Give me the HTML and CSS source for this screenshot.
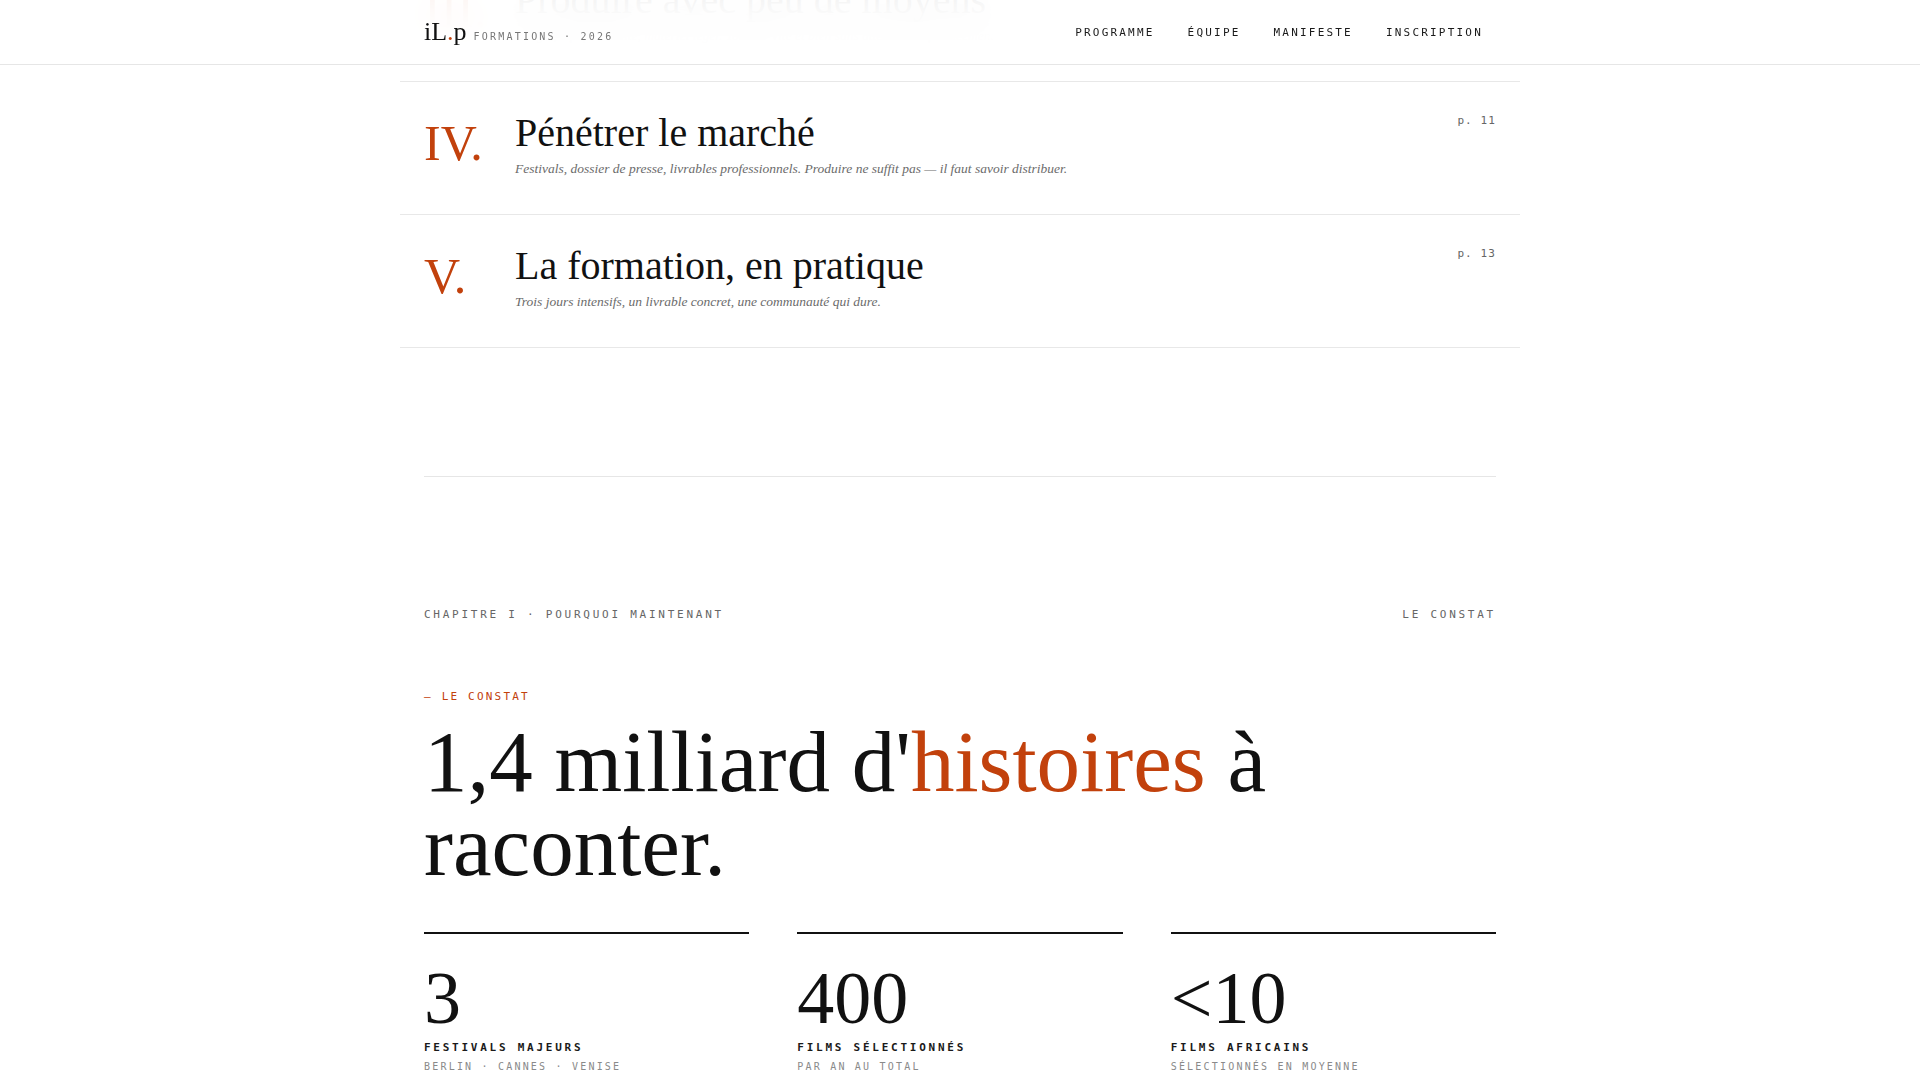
FILE: index.html
```html
<!DOCTYPE html>
<html lang="fr">
<head>
    <meta charset="UTF-8">
    <meta name="viewport" content="width=device-width, initial-scale=1.0">
    <title>iL.p Formations 2026 - Programme</title>
    <link rel="stylesheet" href="styles.css">
</head>
<body>
    <header class="site-header">
        <div class="header-inner">
            <a class="brand" href="#">
                <span class="brand-mark">iL<span class="brand-dot">.</span>p</span>
                <span class="brand-sub">FORMATIONS · 2026</span>
            </a>
            <nav class="main-nav">
                <a href="#programme">PROGRAMME</a>
                <a href="#equipe">ÉQUIPE</a>
                <a href="#manifeste">MANIFESTE</a>
                <a href="#inscription">INSCRIPTION</a>
            </nav>
        </div>
    </header>

    <main>
        <!-- Sommaire -->
        <section class="toc" id="programme">
            <ol class="toc-list">
                <li class="toc-row">
                    <span class="toc-num">III.</span>
                    <div class="toc-body">
                        <h3>Produire avec peu de moyens</h3>
                        <p>Budget, équipe réduite, matériel léger. Tourner vite et bien sans attendre les financements.</p>
                    </div>
                    <span class="toc-page">p. 9</span>
                </li>
                <li class="toc-row">
                    <span class="toc-num">IV.</span>
                    <div class="toc-body">
                        <h3>Pénétrer le marché</h3>
                        <p>Festivals, dossier de presse, livrables professionnels. Produire ne suffit pas — il faut savoir distribuer.</p>
                    </div>
                    <span class="toc-page">p. 11</span>
                </li>
                <li class="toc-row">
                    <span class="toc-num">V.</span>
                    <div class="toc-body">
                        <h3>La formation, en pratique</h3>
                        <p>Trois jours intensifs, un livrable concret, une communauté qui dure.</p>
                    </div>
                    <span class="toc-page">p. 13</span>
                </li>
            </ol>
        </section>

        <div class="wrap">
            <hr class="divider">
        </div>

        <!-- Chapitre I -->
        <section class="chapter wrap" id="manifeste">
            <div class="chapter-head">
                <span>CHAPITRE I · POURQUOI MAINTENANT</span>
                <span>LE CONSTAT</span>
            </div>

            <p class="eyebrow">— LE CONSTAT</p>
            <h2 class="headline">1,4 milliard d'<em>histoires</em> à raconter.</h2>

            <div class="stats">
                <div class="stat">
                    <div class="stat-num">3</div>
                    <div class="stat-label">FESTIVALS MAJEURS</div>
                    <div class="stat-sub">BERLIN · CANNES · VENISE</div>
                </div>
                <div class="stat">
                    <div class="stat-num">400</div>
                    <div class="stat-label">FILMS SÉLECTIONNÉS</div>
                    <div class="stat-sub">PAR AN AU TOTAL</div>
                </div>
                <div class="stat">
                    <div class="stat-num">&lt;10</div>
                    <div class="stat-label">FILMS AFRICAINS</div>
                    <div class="stat-sub">SÉLECTIONNÉS EN MOYENNE</div>
                </div>
            </div>
        </section>
    </main>
</body>
</html>
```

FILE: styles.css
```css
* {
    box-sizing: border-box;
}
body {
    margin: 0;
    background-color: #fff;
    color: #111;
    font-family: "Liberation Serif", "Times New Roman", serif;
}
a {
    color: inherit;
    text-decoration: none;
}

/* Header */
.site-header {
    position: fixed;
    top: 0;
    left: 0;
    right: 0;
    height: 65px;
    background-color: rgba(255, 255, 255, 0.93);
    backdrop-filter: blur(16px);
    border-bottom: 1px solid #e6e6e6;
    z-index: 10;
}
.header-inner {
    max-width: 1120px;
    height: 100%;
    margin: 0 auto;
    padding: 0 24px;
    display: flex;
    align-items: center;
    justify-content: space-between;
}
.brand {
    display: flex;
    align-items: baseline;
    gap: 7px;
}
.brand-mark {
    font-size: 26px;
    line-height: 1;
    color: #111;
}
.brand-dot {
    color: #c2410c;
}
.brand-sub {
    font-family: "DejaVu Sans Mono", monospace;
    font-size: 10px;
    letter-spacing: 0.22em;
    color: #777;
}
.main-nav {
    display: flex;
    gap: 33px;
    margin-right: 13px;
}
.main-nav a {
    font-family: "DejaVu Sans Mono", monospace;
    font-size: 11px;
    letter-spacing: 0.2em;
    color: #1a1a1a;
}

/* Sommaire */
.toc {
    max-width: 1120px;
    margin: -51px auto 0;
}
.toc-list {
    list-style: none;
    margin: 0;
    padding: 0;
}
.toc-row {
    display: grid;
    grid-template-columns: 91px 1fr auto;
    align-items: start;
    padding: 28px 24px 34px;
    border-bottom: 1px solid #e8e8e8;
}
.toc-num {
    font-size: 50px;
    line-height: 1;
    color: #c2410c;
    margin-top: 8px;
}
.toc-body h3 {
    margin: 0;
    font-size: 40px;
    font-weight: 400;
    line-height: 46px;
    color: #111;
}
.toc-body p {
    margin: 2px 0 0;
    font-size: 13.5px;
    font-style: italic;
    line-height: 22px;
    color: #6b6b6b;
}
.toc-page {
    margin-top: 3px;
    font-family: "DejaVu Sans Mono", monospace;
    font-size: 11px;
    line-height: 16px;
    letter-spacing: 0.1em;
    color: #666;
}

/* Chapitre */
.wrap {
    max-width: 1120px;
    margin: 0 auto;
    padding: 0 24px;
}
.divider {
    margin: 128px 0 0;
    border: 0;
    border-top: 1px solid #e6e6e6;
}
.chapter-head {
    margin-top: 130px;
    display: flex;
    justify-content: space-between;
    font-family: "DejaVu Sans Mono", monospace;
    font-size: 11px;
    line-height: 16px;
    letter-spacing: 0.25em;
    color: #666;
}
.eyebrow {
    margin: 66px 0 0;
    font-family: "DejaVu Sans Mono", monospace;
    font-size: 11px;
    line-height: 16px;
    letter-spacing: 0.2em;
    color: #c2410c;
}
.headline {
    margin: 15px 0 0;
    font-size: 87px;
    font-weight: 400;
    line-height: 84px;
    color: #111;
}
.headline em {
    font-style: normal;
    color: #c2410c;
}

/* Chiffres */
.stats {
    margin-top: 44px;
    display: grid;
    grid-template-columns: repeat(3, 1fr);
    gap: 48px;
}
.stat {
    border-top: 2px solid #111;
    padding-top: 27px;
}
.stat-num {
    font-size: 74px;
    line-height: 1;
    color: #111;
}
.stat-label {
    margin-top: 5px;
    font-family: "DejaVu Sans Mono", monospace;
    font-size: 11px;
    font-weight: 700;
    line-height: 16px;
    letter-spacing: 0.25em;
    color: #1a1a1a;
}
.stat-sub {
    margin-top: 3px;
    font-family: "DejaVu Sans Mono", monospace;
    font-size: 10px;
    line-height: 16px;
    letter-spacing: 0.22em;
    color: #8a8a8a;
}
```
